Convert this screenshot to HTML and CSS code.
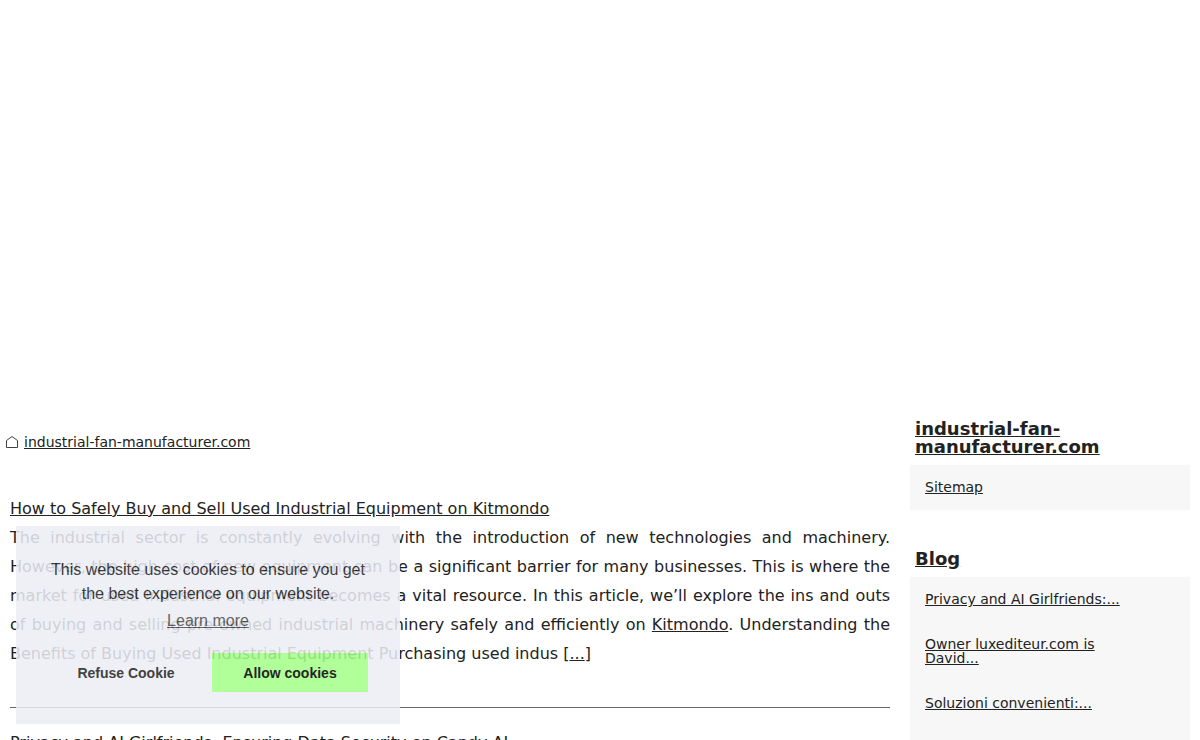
FILE: index.html
```html
<!DOCTYPE html>
<html lang="en">
<head>
    <meta charset="utf-8">
    <title>industrial-fan-manufacturer.com</title>
    <link rel="stylesheet" href="styles.css">
</head>
<body>
    <div class="banner"></div>
    <div class="container">
        <div class="main">
            <div class="breadcrumb">
                <svg class="home" viewBox="0 0 12 12"><path d="M0.5 11.5V4.5L6 0.5L11.5 4.5V11.5Z"/></svg>
                <a href="#">industrial-fan-manufacturer.com</a>
            </div>
            <div class="article">
                <a href="#">How to Safely Buy and Sell Used Industrial Equipment on Kitmondo</a>
                <p>The industrial sector is constantly evolving with the introduction of new technologies and machinery. However, the high cost of new equipment can be a significant barrier for many businesses. This is where the market for used industrial equipment becomes a vital resource. In this article, we’ll explore the ins and outs of buying and selling pre-owned industrial machinery safely and efficiently on <a href="#">Kitmondo</a>. Understanding the Benefits of Buying Used Industrial Equipment Purchasing used indus [<a href="#">...</a>]</p>
            </div>
            <div class="article">
                <a href="#">Privacy and AI Girlfriends: Ensuring Data Security on Candy AI</a>
            </div>
        </div>
        <div class="sidebar">
            <h2><a href="#">industrial-fan-manufacturer.com</a></h2>
            <ul>
                <li><a href="#">Sitemap</a></li>
            </ul>
            <h2><a href="#">Blog</a></h2>
            <ul class="posts">
                <li><a href="#">Privacy and AI Girlfriends:...</a></li>
                <li><a href="#">Owner luxediteur.com is David...</a></li>
                <li><a href="#">Soluzioni convenienti:...</a></li>
            </ul>
        </div>
    </div>

    <div class="cookie">
        <div class="cookie-text">
            This website uses cookies to ensure you get the best experience on our website.
            <a href="#" class="cookie-link">Learn more</a>
        </div>
        <div class="cookie-buttons">
            <button type="button" class="btn refuse">Refuse Cookie</button>
            <button type="button" class="btn allow">Allow cookies</button>
        </div>
    </div>
</body>
</html>
```
FILE: styles.css
```css
* {
    box-sizing: border-box;
}

html {
    height: 100%;
    overflow: hidden;
}

body {
    height: 100%;
    margin: 0;
    overflow: hidden;
    font-family: Verdana, "DejaVu Sans", sans-serif;
    font-size: 16px;
    color: #222;
    background: #fff;
}

a {
    color: #222;
}

.banner {
    height: 400px;
}

.container {
    display: flex;
}

.main {
    flex: 1;
}

.breadcrumb {
    display: flex;
    align-items: center;
    gap: 6px;
    height: 24px;
    margin: 30px 0 40px 6px;
    font-size: 14px;
}

.home {
    width: 12px;
    height: 12px;
    fill: none;
    stroke: #444;
}

.article {
    margin: 0 10px 20px;
    padding-bottom: 39px;
    border-bottom: 1px solid #666;
    line-height: 29px;
    text-align: justify;
}

.article p {
    margin: 0;
}

/* right column */
.sidebar {
    width: 280px;
    margin: 0 10px;
}

.sidebar h2 {
    margin: 0;
    padding: 20px 5px 9px;
    font-size: 18px;
    line-height: 18px;
}

.sidebar ul {
    margin: 0 0 20px;
    padding: 0;
    list-style: none;
    background: #f7f7f7;
}

.sidebar li {
    padding: 15px 55px 16px 15px;
    font-size: 14px;
    line-height: 14px;
}

.sidebar .posts {
    padding-bottom: 30px;
}

/* cookie popup */
.cookie {
    position: fixed;
    left: 16px;
    bottom: 16px;
    width: 384px;
    padding: 32px;
    font-family: Helvetica, "Liberation Sans", sans-serif;
    line-height: 24px;
    text-align: center;
    color: #222;
    background: #edeef5;
    opacity: 0.86;
}

.cookie-text {
    margin-bottom: 20px;
}

.cookie-link {
    display: block;
    padding-top: 3px;
    color: #222;
    opacity: 0.8;
}

.cookie-buttons {
    display: flex;
    gap: 8px;
}

.btn {
    flex: 1;
    height: 39px;
    border: 0;
    font-family: inherit;
    font-size: 14px;
    font-weight: bold;
    color: #222;
    cursor: pointer;
}

.refuse {
    background: none;
}

.allow {
    color: #000;
    background: #a4ff88;
}
```
